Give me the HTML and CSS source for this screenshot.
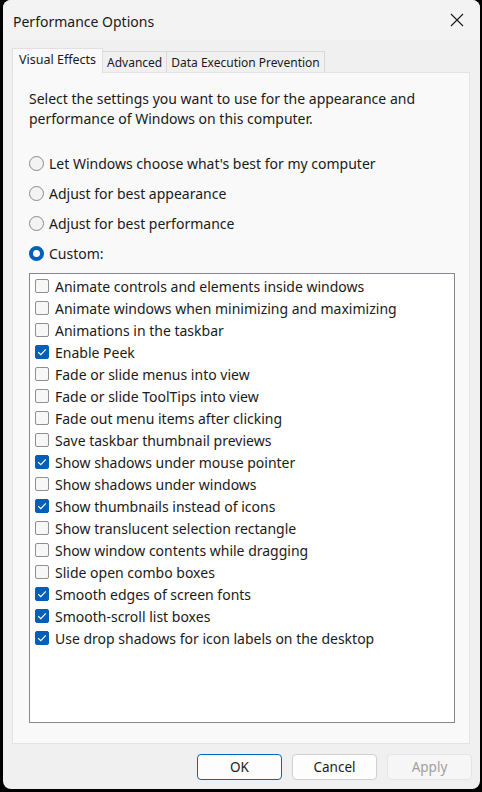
FILE: index.html
```html
<!DOCTYPE html>
<html>
<head>
<meta charset="utf-8">
<link rel="stylesheet" href="styles.css">
</head>
<body>
<div class="dialog">
  <div class="titlebar">
    <span class="title">Performance Options</span>
    <svg class="close" width="14" height="14" viewBox="0 0 14 14"><path d="M1 1 L13 13 M13 1 L1 13" stroke="#1a1a1a" stroke-width="1.1" fill="none"/></svg>
  </div>
  <div class="tabs">
    <div class="tab active">Visual Effects</div>
    <div class="tab">Advanced</div>
    <div class="tab">Data Execution Prevention</div>
  </div>
  <div class="panel">
    <p class="desc">Select the settings you want to use for the appearance and performance of Windows on this computer.</p>
    <div class="radios">
      <div class="radio"><span class="rdot"></span>Let Windows choose what's best for my computer</div>
      <div class="radio"><span class="rdot"></span>Adjust for best appearance</div>
      <div class="radio"><span class="rdot"></span>Adjust for best performance</div>
      <div class="radio"><span class="rdot on"></span>Custom:</div>
    </div>
    <div class="list">
      <div class="item"><span class="cb"></span>Animate controls and elements inside windows</div>
      <div class="item"><span class="cb"></span>Animate windows when minimizing and maximizing</div>
      <div class="item"><span class="cb"></span>Animations in the taskbar</div>
      <div class="item"><span class="cb on"><svg viewBox="0 0 14 14"><path d="M3.2 7.2 L5.8 9.6 L10.8 4.4" stroke="#fff" stroke-width="1.2" fill="none"/></svg></span>Enable Peek</div>
      <div class="item"><span class="cb"></span>Fade or slide menus into view</div>
      <div class="item"><span class="cb"></span>Fade or slide ToolTips into view</div>
      <div class="item"><span class="cb"></span>Fade out menu items after clicking</div>
      <div class="item"><span class="cb"></span>Save taskbar thumbnail previews</div>
      <div class="item"><span class="cb on"><svg viewBox="0 0 14 14"><path d="M3.2 7.2 L5.8 9.6 L10.8 4.4" stroke="#fff" stroke-width="1.2" fill="none"/></svg></span>Show shadows under mouse pointer</div>
      <div class="item"><span class="cb"></span>Show shadows under windows</div>
      <div class="item"><span class="cb on"><svg viewBox="0 0 14 14"><path d="M3.2 7.2 L5.8 9.6 L10.8 4.4" stroke="#fff" stroke-width="1.2" fill="none"/></svg></span>Show thumbnails instead of icons</div>
      <div class="item"><span class="cb"></span>Show translucent selection rectangle</div>
      <div class="item"><span class="cb"></span>Show window contents while dragging</div>
      <div class="item"><span class="cb"></span>Slide open combo boxes</div>
      <div class="item"><span class="cb on"><svg viewBox="0 0 14 14"><path d="M3.2 7.2 L5.8 9.6 L10.8 4.4" stroke="#fff" stroke-width="1.2" fill="none"/></svg></span>Smooth edges of screen fonts</div>
      <div class="item"><span class="cb on"><svg viewBox="0 0 14 14"><path d="M3.2 7.2 L5.8 9.6 L10.8 4.4" stroke="#fff" stroke-width="1.2" fill="none"/></svg></span>Smooth-scroll list boxes</div>
      <div class="item"><span class="cb on"><svg viewBox="0 0 14 14"><path d="M3.2 7.2 L5.8 9.6 L10.8 4.4" stroke="#fff" stroke-width="1.2" fill="none"/></svg></span>Use drop shadows for icon labels on the desktop</div>
    </div>
  </div>
  <div class="buttons">
    <button class="btn primary">OK</button>
    <button class="btn">Cancel</button>
    <button class="btn disabled">Apply</button>
  </div>
</div>
</body>
</html>
```

FILE: styles.css
```css
* { box-sizing: border-box; }
html, body { margin: 0; padding: 0; }
body {
  background: #000;
  width: 482px;
  height: 792px;
  overflow: hidden;
  font-family: "Noto Sans", "Open Sans", sans-serif;
  color: #000;
}
.dialog {
  margin: 0 2px 0 3px;
  width: 477px;
  height: 789px;
  background: #f0f0f0;
  border-radius: 8px;
  display: flex;
  flex-direction: column;
  overflow: hidden;
}
.titlebar {
  height: 40px;
  background: #f3f3f3;
  display: flex;
  align-items: center;
  justify-content: space-between;
  padding: 0 16px 0 10px;
}
.title {
  font-size: 14px;
  color: #1a1a1a;
  position: relative;
  top: 1px;
}
.close { width: 14px; height: 14px; }
.tabs {
  display: flex;
  align-items: flex-end;
  margin: 8px 0 0 9px;
  height: 24px;
  position: relative;
  z-index: 1;
}
.tab {
  font-size: 12px;
  height: 21px;
  padding: 0 4px;
  border: 1px solid #d9d9d9;
  border-bottom: none;
  background: #f0f0f0;
  display: flex;
  align-items: center;
  color: #1a1a1a;
}
.tab + .tab { border-left: none; }
.tab.active {
  height: 25px;
  background: #f9f9f9;
  font-size: 12.5px;
  padding: 0 6px;
  margin-bottom: -1px;
  border-color: #e0e0e0;
  align-items: flex-start;
  padding-top: 2px;
}
.panel {
  margin: 0 10px 0 9px;
  height: 672px;
  background: #f9f9f9;
  border: 1px solid #e3e3e3;
  padding: 16px 14px 20px 16px;
  display: flex;
  flex-direction: column;
}
.desc {
  margin: 0;
  font-size: 14px;
  line-height: 20px;
  color: #1a1a1a;
}
.radios {
  margin-top: 19px;
  display: flex;
  flex-direction: column;
}
.radio {
  height: 30px;
  display: flex;
  align-items: center;
  gap: 5px;
  font-size: 14px;
  color: #1a1a1a;
}
.rdot {
  width: 15px;
  height: 15px;
  border: 1px solid #8a8a8a;
  border-radius: 50%;
  background: #f3f3f3;
  flex: none;
}
.rdot.on {
  border: 4px solid #005fb8;
  background: #fff;
}
.list {
  margin-top: 5px;
  flex: 1;
  background: #fff;
  border: 1px solid #828790;
  padding: 1px 0 0 5px;
}
.item {
  height: 22px;
  display: flex;
  align-items: center;
  gap: 6px;
  font-size: 14px;
  color: #1a1a1a;
}
.cb {
  width: 14px;
  height: 14px;
  border: 1px solid #8f8f8f;
  border-radius: 2px;
  background: #f7f7f7;
  flex: none;
  display: flex;
}
.cb.on {
  background: #005fb8;
  border-color: #005fb8;
}
.cb svg { display: block; margin: -1px; width: 14px; height: 14px; }
.buttons {
  display: flex;
  justify-content: flex-end;
  gap: 10px;
  padding: 10px 8px 0 0;
}
.btn {
  width: 85px;
  height: 26px;
  font-family: "Noto Sans", "Open Sans", sans-serif;
  font-size: 13.5px;
  background: #fdfdfd;
  border: 1px solid #d0d0d0;
  border-radius: 4px;
  color: #1a1a1a;
  padding: 0;
}
.btn.primary { border-color: #0067c0; }
.btn.disabled { color: #a0a0a0; background: #f6f6f6; border-color: #e5e5e5; }
```
